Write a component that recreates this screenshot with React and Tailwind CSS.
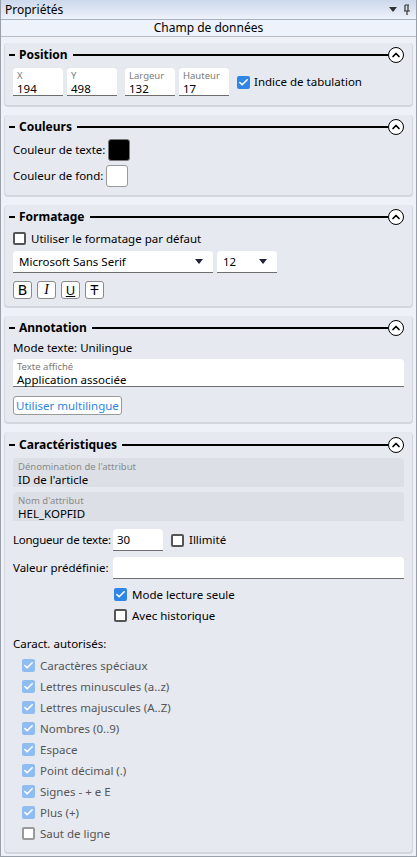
import { Check, ChevronUp } from "lucide-react";

const font = { fontFamily: '"Noto Sans", "Open Sans", sans-serif' };

function Section({ title, children, className = "" }) {
  return (
    <div className={"mx-[4px] rounded-[3px] bg-[#e6e9f0] shadow-[0_1px_0_1px_#d3d6dd] px-[8px] pt-[1px] " + className}>
      <div className="flex h-[22px] items-center -ml-[4px]">
        <span className="w-[6px] h-[1.5px] bg-black mr-[4px]" />
        <span className="font-bold text-[12px] text-black leading-none">{title}</span>
        <span className="flex-1 h-[1.5px] bg-black ml-[5px]" />
        <span className="flex items-center justify-center w-[16px] h-[16px] rounded-full border-[1.5px] border-black bg-white">
          <ChevronUp size={12} strokeWidth={3.5} />
        </span>
      </div>
      {children}
    </div>
  );
}

function Box({ checked, disabled }) {
  if (checked) {
    return (
      <span className={"flex items-center justify-center w-[13px] h-[13px] rounded-[2px] " + (disabled ? "bg-[#8fbdf2]" : "bg-[#2f86e6]")}>
        <Check size={11} strokeWidth={3.5} className="text-white" />
      </span>
    );
  }
  return <span className={"w-[13px] h-[13px] rounded-[2px] border-[2px] bg-white " + (disabled ? "border-[#9a9a9a]" : "border-[#555]")} />;
}

function CheckRow({ checked, label, disabled, className = "" }) {
  return (
    <div className={"flex items-center gap-[5px] h-[21px] " + className}>
      <Box checked={checked} disabled={disabled} />
      <span className={"text-[11.5px] leading-none whitespace-nowrap " + (disabled ? "text-[#555]" : "text-black")}>{label}</span>
    </div>
  );
}

function Field({ label, value, className = "" }) {
  return (
    <div className={"bg-white rounded-t-[4px] border-b-[1.5px] border-[#6e6e6e] h-[28px] px-[4px] flex flex-col leading-none " + className}>
      <span className="text-[9.5px] text-[#7a7a7a] mt-[2px] h-[11px] leading-[11px] whitespace-nowrap">{label}</span>
      <span className="text-[11.5px] text-black h-[13px] leading-[13px] mt-[1px] whitespace-nowrap">{value}</span>
    </div>
  );
}

function Dropdown({ value, className = "" }) {
  return (
    <div className={"bg-white rounded-t-[4px] border-b-[1.5px] border-[#6e6e6e] h-[22px] pl-[6px] pr-[10px] flex items-center justify-between " + className}>
      <span className="text-[11.5px] leading-none">{value}</span>
      <span className="w-0 h-0 border-l-[4px] border-r-[4px] border-t-[5px] border-l-transparent border-r-transparent border-t-[#202040]" />
    </div>
  );
}

function StyleBtn({ children }) {
  return (
    <span className="flex items-center justify-center w-[19px] h-[18px] rounded-[3px] border border-[#8a8a8a] bg-white text-[14px] leading-none">
      {children}
    </span>
  );
}

export default function App() {
  const allowed = [
    ["Caractères spéciaux", true],
    ["Lettres minuscules (a..z)", true],
    ["Lettres majuscules (A..Z)", true],
    ["Nombres (0..9)", true],
    ["Espace", true],
    ["Point décimal (.)", true],
    ["Signes - + e E", true],
    ["Plus (+)", true],
    ["Saut de ligne", false],
  ];

  return (
    <div style={font} className="w-[417px] h-[857px] bg-[#eef1f8] border-x border-b border-[#9aa0aa] text-black flex flex-col overflow-hidden">
      <div className="h-[20px] shrink-0 flex items-center justify-between px-[4px] bg-gradient-to-b from-[#ccd8eb] to-[#eef2fa] border-b border-[#a9b2c0]">
        <span className="text-[12px] leading-none">Propriétés</span>
        <div className="flex items-center gap-[6px] pr-[1px]">
          <span className="w-0 h-0 border-l-[4px] border-r-[4px] border-t-[5px] border-l-transparent border-r-transparent border-t-[#333]" />
          <svg width="8" height="11" viewBox="0 0 8 11">
            <path d="M2 1h4M2 1v6M5 1v6M1 7h6M4 7v4" stroke="#333" strokeWidth="1.2" fill="none" />
          </svg>
        </div>
      </div>
      <div className="h-[17px] shrink-0 flex items-center justify-center text-[12px] leading-none bg-[#eef2fa] border-b border-[#b8bec8]">
        Champ de données
      </div>

      <div className="flex flex-col gap-[10px] pt-[6px]">
        <Section title="Position" className="pb-[9px]">
          <div className="flex items-center mt-[2px]">
            <Field label="X" value="194" className="w-[50px]" />
            <Field label="Y" value="498" className="w-[50px] ml-[4px]" />
            <Field label="Largeur" value="132" className="w-[50px] ml-[8px]" />
            <Field label="Hauteur" value="17" className="w-[50px] ml-[4px]" />
            <div className="ml-[8px] flex items-center gap-[4px]">
              <Box checked />
              <span className="text-[11.5px] leading-none">Indice de tabulation</span>
            </div>
          </div>
        </Section>

        <Section title="Couleurs" className="pb-[8px]">
          <div className="flex items-center gap-[3px] mt-[1px]">
            <span className="text-[11.5px] leading-none">Couleur de texte:</span>
            <span className="w-[22px] h-[22px] rounded-[3px] bg-black border border-[#777]" />
          </div>
          <div className="flex items-center gap-[3px] mt-[4px]">
            <span className="text-[11.5px] leading-none">Couleur de fond:</span>
            <span className="w-[22px] h-[22px] rounded-[3px] bg-white border border-[#999]" />
          </div>
        </Section>

        <Section title="Formatage" className="pb-[7px]">
          <CheckRow checked={false} label="Utiliser le formatage par défaut" />
          <div className="flex items-center gap-[4px] mt-[2px]">
            <Dropdown value="Microsoft Sans Serif" className="w-[200px]" />
            <Dropdown value="12" className="w-[60px]" />
          </div>
          <div className="flex items-center gap-[5px] mt-[8px]">
            <StyleBtn><span style={{ fontFamily: '"DejaVu Sans", sans-serif' }}>B</span></StyleBtn>
            <StyleBtn><span className="italic" style={{ fontFamily: '"Liberation Serif", serif' }}>I</span></StyleBtn>
            <StyleBtn><span className="underline text-[13px]">U</span></StyleBtn>
            <StyleBtn><span className="line-through">T</span></StyleBtn>
          </div>
        </Section>

        <Section title="Annotation" className="pb-[7px]">
          <div className="text-[11.5px] leading-none h-[18px] flex items-center">Mode texte: Unilingue</div>
          <Field label="Texte affiché" value="Application associée" className="mt-[2px]" />
          <button className="mt-[9px] h-[19px] px-[2px] rounded-[3px] border border-[#999] bg-white text-[11.5px] text-[#2a86e0] leading-none block">
            Utiliser multilingue
          </button>
        </Section>

        <Section title="Caractéristiques" className="pb-[8px] pt-[2px]">
          <div className="mt-[2px] rounded-t-[4px] bg-[#dcdfe6] h-[29px] px-[5px] flex flex-col leading-none">
            <span className="text-[9.5px] text-[#8a8a8a] mt-[3px] h-[11px] leading-[11px]">Dénomination de l'attribut</span>
            <span className="text-[11.5px] h-[13px] leading-[13px] mt-[1px]">ID de l'article</span>
          </div>
          <div className="mt-[5px] rounded-t-[4px] bg-[#dcdfe6] h-[29px] px-[5px] flex flex-col leading-none">
            <span className="text-[9.5px] text-[#8a8a8a] mt-[3px] h-[11px] leading-[11px]">Nom d'attribut</span>
            <span className="text-[11.5px] h-[13px] leading-[13px] mt-[1px]">HEL_KOPFID</span>
          </div>
          <div className="flex items-center mt-[8px]">
            <span className="w-[100px] text-[11.5px] leading-none whitespace-nowrap tracking-[-0.25px]">Longueur de texte:</span>
            <div className="w-[50px] h-[22px] bg-white rounded-t-[4px] border-b-[1.5px] border-[#6e6e6e] px-[4px] flex items-center text-[11.5px] leading-none">30</div>
            <CheckRow checked={false} label="Illimité" className="ml-[8px]" />
          </div>
          <div className="flex items-center mt-[6px]">
            <span className="w-[100px] text-[11.5px] leading-none whitespace-nowrap">Valeur prédéfinie:</span>
            <div className="flex-1 h-[22px] bg-white rounded-t-[4px] border-b-[1.5px] border-[#6e6e6e]" />
          </div>
          <div className="ml-[101px] mt-[5px]">
            <CheckRow checked label="Mode lecture seule" />
            <CheckRow checked={false} label="Avec historique" />
          </div>
          <div className="text-[11.5px] leading-none mt-[7px] h-[21px] flex items-center">Caract. autorisés:</div>
          <div className="ml-[9px] mt-[1px]">
            {allowed.map(([label, c]) => (
              <CheckRow key={label} checked={c} label={label} disabled />
            ))}
          </div>
        </Section>
      </div>
    </div>
  );
}
